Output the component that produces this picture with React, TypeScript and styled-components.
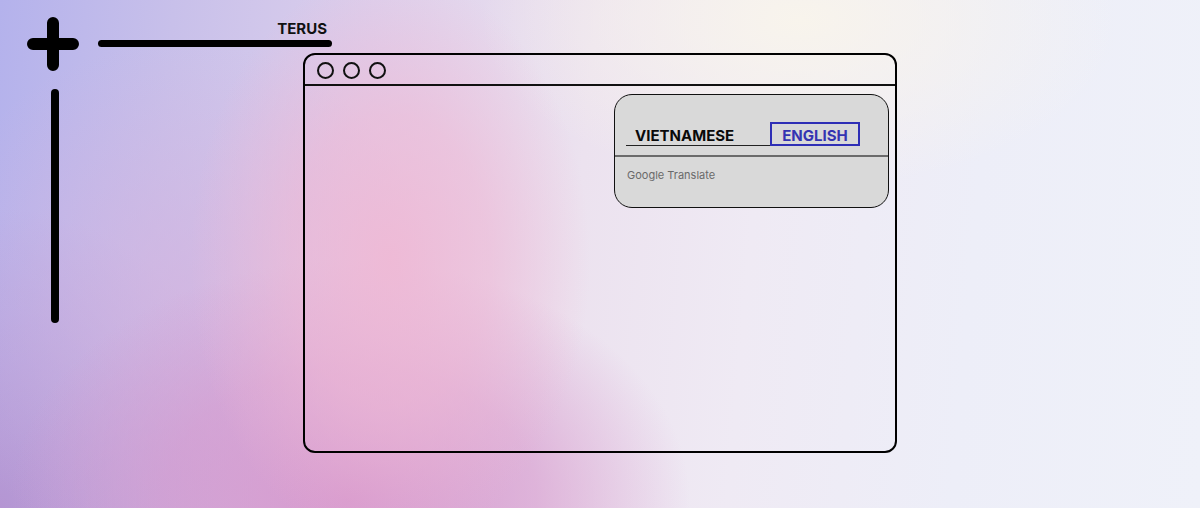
import styled, { createGlobalStyle } from "styled-components";

const GlobalStyle = createGlobalStyle`
  html, body {
    margin: 0;
    padding: 0;
    height: 100%;
  }
  body {
    font-family: Inter, "Liberation Sans", sans-serif;
  }
  * {
    box-sizing: border-box;
  }
`;

const Page = styled.div`
  width: 1200px;
  height: 508px;
  overflow: hidden;
  display: flex;
  gap: 19px;
  padding: 17px 0 0 27px;
  background:
    radial-gradient(ellipse 200px 290px at 390px 260px, rgba(240, 184, 212, 0.9), rgba(240, 184, 212, 0.6) 50%, rgba(240, 184, 212, 0) 100%),
    radial-gradient(ellipse 340px 240px at 350px 500px, rgba(214, 150, 204, 0.95), rgba(214, 150, 204, 0.6) 55%, rgba(214, 150, 204, 0) 100%),
    radial-gradient(ellipse 260px 260px at 180px 300px, rgba(212, 178, 222, 0.7), rgba(212, 178, 222, 0) 100%),
    radial-gradient(ellipse 320px 170px at 800px 20px, rgba(248, 244, 236, 1), rgba(248, 244, 236, 0) 100%),
    radial-gradient(ellipse 260px 300px at 0px 508px, rgba(180, 146, 208, 0.9), rgba(180, 146, 208, 0) 100%),
    linear-gradient(95deg, #b4b2ec 0%, #c8c0ea 14%, #dccfec 30%, #ece2ef 48%, #efeaf4 62%, #edeef8 80%, #eff1f9 100%);
`;

const LeftRail = styled.div`
  width: 52px;
  display: flex;
  flex-direction: column;
  align-items: center;
`;

const VLine = styled.div`
  width: 8px;
  height: 234px;
  margin-top: 18px;
  margin-left: 3px;
  background: #000;
  border-radius: 4px;
`;

const Main = styled.div`
  display: flex;
  flex-direction: column;
`;

const Header = styled.div`
  width: 234px;
  display: flex;
  flex-direction: column;
  align-items: flex-end;
`;

const Brand = styled.div`
  margin-top: 3px;
  margin-right: 5px;
  font-size: 15px;
  line-height: 17px;
  font-weight: 700;
  color: #111;
`;

const HLine = styled.div`
  width: 234px;
  height: 7.5px;
  margin-top: 2.5px;
  background: #000;
  border-radius: 4px;
`;

const Window = styled.div`
  margin: 6px 0 0 205px;
  width: 594px;
  height: 400px;
  border: 2px solid #000;
  border-radius: 12px;
  display: flex;
  flex-direction: column;
`;

const TitleBar = styled.div`
  height: 31px;
  display: flex;
  align-items: flex-start;
  gap: 9px;
  padding: 7px 0 0 12px;
  border-bottom: 2px solid #111;
`;

const Dot = styled.span`
  width: 17px;
  height: 17px;
  border: 2px solid #111;
  border-radius: 50%;
`;

const WindowBody = styled.div`
  flex: 1;
  display: flex;
  justify-content: flex-end;
  align-items: flex-start;
  padding: 8px 6px;
`;

const Card = styled.div`
  width: 275px;
  height: 114px;
  border: 1px solid #111;
  border-radius: 18px;
  background: #d9d9d9;
`;

const Tabs = styled.div`
  display: flex;
  padding: 27px 0 0 11px;
`;

const Tab = styled.div<{ $active?: boolean; $width: number }>`
  width: ${(p) => p.$width}px;
  height: 24px;
  display: flex;
  align-items: center;
  justify-content: ${(p) => (p.$active ? "center" : "flex-start")};
  padding: ${(p) => (p.$active ? "2px 0 0 0" : "3px 0 0 9px")};
  font-size: 15px;
  line-height: 17px;
  font-weight: 700;
  color: ${(p) => (p.$active ? "#3434b2" : "#0a0a0a")};
  border: ${(p) => (p.$active ? "2px solid #2f2fb6" : "none")};
  border-bottom: ${(p) => (p.$active ? "2px solid #2f2fb6" : "1.5px solid #222")};
`;

const Divider = styled.div`
  margin-top: 9px;
  height: 2px;
  background: #6b6b6b;
`;

const Footer = styled.div`
  padding: 12px 12px 0;
  font-size: 11px;
  line-height: 13px;
  color: #6a6a6a;
`;

const Plus = () => (
  <svg width="52" height="54" viewBox="0 0 52 54">
    <path d="M26 6 V48 M6 27 H46" stroke="#000" strokeWidth="12" strokeLinecap="round" />
  </svg>
);

export default function App() {
  return (
    <>
      <GlobalStyle />
      <Page>
        <LeftRail>
          <Plus />
          <VLine />
        </LeftRail>
        <Main>
          <Header>
            <Brand>TERUS</Brand>
            <HLine />
          </Header>
          <Window>
            <TitleBar>
              <Dot />
              <Dot />
              <Dot />
            </TitleBar>
            <WindowBody>
              <Card>
                <Tabs>
                  <Tab $width={144}>VIETNAMESE</Tab>
                  <Tab $width={90} $active>
                    ENGLISH
                  </Tab>
                </Tabs>
                <Divider />
                <Footer>Google Translate</Footer>
              </Card>
            </WindowBody>
          </Window>
        </Main>
      </Page>
    </>
  );
}
